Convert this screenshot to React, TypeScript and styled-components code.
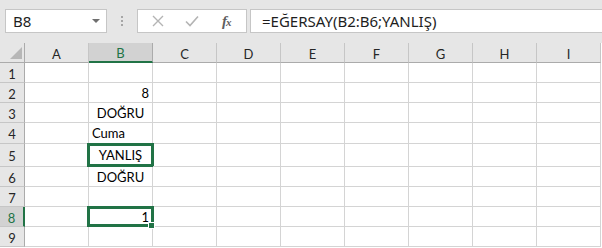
import React from 'react';
import styled, { createGlobalStyle } from 'styled-components';

const GlobalStyle = createGlobalStyle`
    body {
        margin: 0;
        background: #ffffff;
        overflow: hidden;
    }
`

const EXCEL_GREEN = '#217346';
const CELL_FONT = `Lato, "Liberation Sans", sans-serif`;
const UI_FONT = `"Noto Sans", "Open Sans", sans-serif`;

export const Window = styled.div`
    width: 602px;
    height: 248px;
    display: flex;
    flex-direction: column;
    background: #ffffff;
    overflow: hidden;
`

export const Toolbar = styled.div`
    height: 43px;
    flex-shrink: 0;
    display: flex;
    align-items: flex-start;
    padding: 9px 0 0 5px;
    box-sizing: border-box;
    background: #e6e6e6;
`

export const NameBox = styled.div`
    width: 102px;
    height: 24px;
    box-sizing: border-box;
    display: flex;
    align-items: center;
    justify-content: space-between;
    padding: 0 6px 0 7px;
    background: #ffffff;
    border: 1px solid #c6c6c6;
    font-family: ${UI_FONT};
    font-size: 15px;
    color: #1e1e1e;
`

export const DropArrow = styled.span`
    width: 0;
    height: 0;
    border-left: 4px solid transparent;
    border-right: 4px solid transparent;
    border-top: 4px solid #6f6f6f;
`

export const Grip = styled.div`
    width: 30px;
    height: 24px;
    display: flex;
    flex-direction: column;
    align-items: center;
    justify-content: center;
    gap: 2px;
`

export const GripDot = styled.span`
    width: 2px;
    height: 2px;
    background: #a6a6a6;
`

export const FormulaButtons = styled.div`
    width: 110px;
    height: 24px;
    box-sizing: border-box;
    display: flex;
    align-items: center;
    padding-left: 13px;
    gap: 20px;
    background: #ffffff;
    border: 1px solid #c6c6c6;
`

export const IconSlot = styled.span`
    width: 14px;
    height: 14px;
    display: flex;
    align-items: center;
    justify-content: center;
`

export const FxLabel = styled.span`
    margin-left: 3px;
    font-family: "Liberation Serif", serif;
    font-style: italic;
    font-weight: bold;
    font-size: 15px;
    color: #5f5f5f;
    letter-spacing: -1px;

    small {
        font-size: 11px;
    }
`

export const FormulaInput = styled.div`
    flex: 1;
    height: 24px;
    margin-left: 3px;
    box-sizing: border-box;
    display: flex;
    align-items: center;
    padding-left: 11px;
    background: #ffffff;
    border: 1px solid #c6c6c6;
    border-right: none;
    font-family: ${UI_FONT};
    font-size: 15px;
    color: #1e1e1e;
    white-space: nowrap;
`

const ROW_HEIGHTS = [20, 20, 20, 21, 23, 20, 20, 20, 20];
const COLUMNS = ['A', 'B', 'C', 'D', 'E', 'F', 'G', 'H', 'I'];

export const Sheet = styled.div`
    display: grid;
    grid-template-columns: 25px repeat(9, 64px);
    grid-template-rows: 20px ${ROW_HEIGHTS.map((h) => `${h}px`).join(' ')};
`

export const Corner = styled.div`
    box-sizing: border-box;
    background: #e6e6e6;
    border-right: 1px solid #ababab;
    border-bottom: 1px solid #ababab;
    display: flex;
    align-items: flex-end;
    justify-content: flex-end;
    padding: 0 2px 3px 0;
`

export const ColumnHeader = styled.div<{ $active?: boolean }>`
    box-sizing: border-box;
    display: flex;
    align-items: center;
    justify-content: center;
    padding-top: 2px;
    background: ${(p) => (p.$active ? '#d2d2d2' : '#e6e6e6')};
    border-right: 1px solid ${(p) => (p.$active ? '#ababab' : '#c6c6c6')};
    border-bottom: ${(p) => (p.$active ? `2px solid ${EXCEL_GREEN}` : '1px solid #ababab')};
    font-family: ${CELL_FONT};
    font-size: 13px;
    color: ${(p) => (p.$active ? EXCEL_GREEN : '#262626')};
`

export const RowHeader = styled.div<{ $active?: boolean }>`
    box-sizing: border-box;
    display: flex;
    align-items: center;
    justify-content: center;
    padding-top: 2px;
    background: ${(p) => (p.$active ? '#d2d2d2' : '#e6e6e6')};
    border-right: ${(p) => (p.$active ? `2px solid ${EXCEL_GREEN}` : '1px solid #ababab')};
    border-bottom: 1px solid #c6c6c6;
    font-family: ${CELL_FONT};
    font-size: 13px;
    color: ${(p) => (p.$active ? EXCEL_GREEN : '#262626')};
`

export const Cell = styled.div<{ $align?: 'left' | 'center' | 'right'; $outlined?: boolean }>`
    position: relative;
    box-sizing: border-box;
    display: flex;
    align-items: center;
    justify-content: ${(p) =>
        p.$align === 'right' ? 'flex-end' : p.$align === 'center' ? 'center' : 'flex-start'};
    padding: 0 3px;
    border-right: 1px solid #d4d4d4;
    border-bottom: 1px solid #d4d4d4;
    font-family: ${CELL_FONT};
    font-size: 13px;
    color: #000000;
    white-space: nowrap;

    ${(p) =>
        p.$outlined &&
        `
        &::after {
            content: '';
            position: absolute;
            top: -1px;
            left: -2px;
            right: -2px;
            bottom: -1px;
            border: 3px solid ${EXCEL_GREEN};
            pointer-events: none;
        }
    `}
`

export const FillHandle = styled.span`
    position: absolute;
    right: -3px;
    bottom: -3px;
    width: 5px;
    height: 5px;
    background: ${EXCEL_GREEN};
    border: 1px solid #ffffff;
    z-index: 2;
`

type CellData = { text: string; align: 'left' | 'center' | 'right'; outlined?: boolean; handle?: boolean };

const B_COLUMN: Record<number, CellData> = {
    2: { text: '8', align: 'right' },
    3: { text: 'DOĞRU', align: 'center' },
    4: { text: 'Cuma', align: 'left' },
    5: { text: 'YANLIŞ', align: 'center', outlined: true },
    6: { text: 'DOĞRU', align: 'center' },
    8: { text: '1', align: 'right', outlined: true, handle: true },
};

const ACTIVE_ROW = 8;
const ACTIVE_COL = 'B';

const App: React.FC = () => {
    return (
        <>
            <GlobalStyle />
            <Window>
                <Toolbar>
                    <NameBox>
                        <span>B8</span>
                        <DropArrow />
                    </NameBox>
                    <Grip>
                        <GripDot />
                        <GripDot />
                        <GripDot />
                    </Grip>
                    <FormulaButtons>
                        <IconSlot>
                            <svg width="12" height="12" viewBox="0 0 12 12">
                                <path d="M1 1 L11 11 M11 1 L1 11" stroke="#b4b4b4" strokeWidth="1.4" fill="none" />
                            </svg>
                        </IconSlot>
                        <IconSlot>
                            <svg width="14" height="12" viewBox="0 0 14 12">
                                <path d="M1 6.5 L5 10.5 L13 1.5" stroke="#b4b4b4" strokeWidth="1.6" fill="none" />
                            </svg>
                        </IconSlot>
                        <FxLabel>
                            f<small>x</small>
                        </FxLabel>
                    </FormulaButtons>
                    <FormulaInput>=EĞERSAY(B2:B6;YANLIŞ)</FormulaInput>
                </Toolbar>
                <Sheet>
                    <Corner>
                        <svg width="12" height="12" viewBox="0 0 12 12">
                            <polygon points="0,12 12,0 12,12" fill="#b7b7b7" />
                        </svg>
                    </Corner>
                    {COLUMNS.map((c) => (
                        <ColumnHeader key={c} $active={c === ACTIVE_COL}>
                            {c}
                        </ColumnHeader>
                    ))}
                    {ROW_HEIGHTS.map((_, i) => {
                        const row = i + 1;
                        return (
                            <React.Fragment key={row}>
                                <RowHeader $active={row === ACTIVE_ROW}>{row}</RowHeader>
                                {COLUMNS.map((c) => {
                                    const data = c === 'B' ? B_COLUMN[row] : undefined;
                                    return (
                                        <Cell key={c} $align={data?.align} $outlined={data?.outlined}>
                                            {data?.text}
                                            {data?.handle && <FillHandle />}
                                        </Cell>
                                    );
                                })}
                            </React.Fragment>
                        );
                    })}
                </Sheet>
            </Window>
        </>
    );
}

export default App;
